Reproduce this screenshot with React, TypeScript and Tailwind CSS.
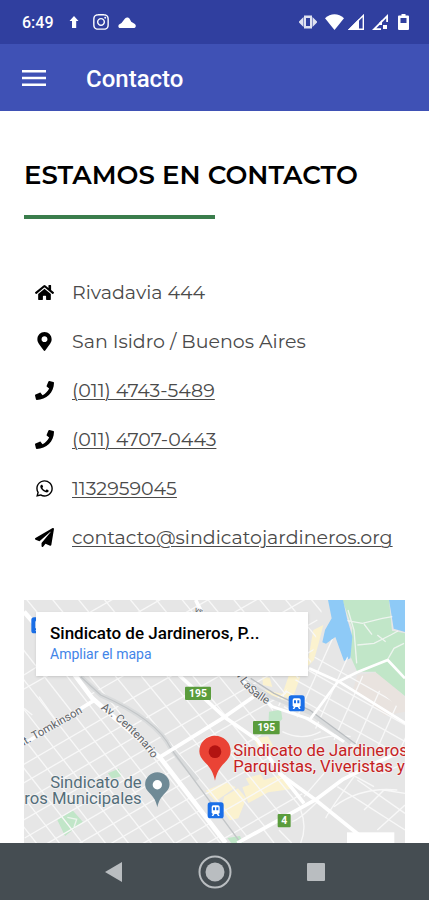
import type { IconType } from 'react-icons';
import { FaHome, FaMapMarkerAlt, FaPaperPlane, FaPhone, FaWhatsapp } from 'react-icons/fa';
import { FaInstagram } from 'react-icons/fa6';

type Contact = { icon: IconType; text: string; href?: string };

const contacts: Contact[] = [
  { icon: FaHome, text: 'Rivadavia 444' },
  { icon: FaMapMarkerAlt, text: 'San Isidro / Buenos Aires' },
  { icon: FaPhone, text: '(011) 4743-5489', href: 'tel:01147435489' },
  { icon: FaPhone, text: '(011) 4707-0443', href: 'tel:01147070443' },
  { icon: FaWhatsapp, text: '1132959045', href: 'https://wa.me/1132959045' },
  {
    icon: FaPaperPlane,
    text: 'contacto@sindicatojardineros.org',
    href: 'mailto:contacto@sindicatojardineros.org',
  },
];

function StatusBar() {
  return (
    <div className="flex h-11 items-center justify-between bg-[#303f9f] pr-5 pl-[22px] text-white">
      <div className="flex items-center">
        <span className="w-[46px] pt-0.5 text-base font-medium">6:49</span>
        <svg className="h-3 w-3" viewBox="0 0 12 12" fill="currentColor">
          <path d="M6 0l4.500 5H8.200v7H4V5H1.500z" />
        </svg>
        <FaInstagram className="ml-3 h-[18px] w-[18px]" />
        <svg className="ml-2 h-[11px] w-[18px]" viewBox="0 0 18 11" fill="currentColor">
          <path d="M1.500 11C0 10.500 0 8 1.500 7.200L3.500 6 7 1.500C8.500 0 11 .3 12 2.500l1.200 2.300 3.300 2C18.400 8 18 10.600 16.300 11z" />
        </svg>
      </div>
      <div className="flex items-center">
        <svg className="h-3.5 w-[18px]" viewBox="0 0 18 14" fill="currentColor">
          <path d="M5 .5h8v13H5zM4.500 2v10L0 7.500v-1zM13.500 2v10L18 7.500v-1z" opacity=".85" />
          <rect x="7" y="3" width="4" height="8" fill="#303f9f" />
        </svg>
        <svg className="ml-2 h-4 w-[19px]" viewBox="0 0 19 16" fill="currentColor">
          <path d="M9.500 16L0 4.200C5.500-1 13.500-1 19 4.200z" />
        </svg>
        <svg className="ml-1 h-4 w-4" viewBox="0 0 16 16">
          <path d="M1.500 15.300L15.300 1.500v13.800z" fill="none" stroke="currentColor" strokeWidth="1.400" />
          <path d="M0 16L11 5v11z" fill="currentColor" />
        </svg>
        <svg className="ml-2 h-4 w-4" viewBox="0 0 16 16" fill="currentColor">
          <path d="M0 16L16 0v8h-1.800V4.300L4.300 14.200H9V16z" />
          <path d="M7 9l3-3v5H7zM11 11h4v4h-4z" />
        </svg>
        <svg className="ml-2.5 h-4 w-[11px]" viewBox="0 0 11 16" fill="currentColor">
          <path
            fillRule="evenodd"
            d="M3.500 0h4v1.500H10a1 1 0 0 1 1 1V15a1 1 0 0 1-1 1H1a1 1 0 0 1-1-1V2.500a1 1 0 0 1 1-1h2.500zM2.500 4v5h6V4z"
          />
        </svg>
      </div>
    </div>
  );
}

function AppBar() {
  return (
    <header className="flex h-[67px] items-center bg-[#3f51b5] pl-[22px] text-white">
      <button type="button" aria-label="Abrir menú" className="flex w-16 items-center">
        <svg className="h-4 w-6" viewBox="0 0 24 16" fill="currentColor">
          <path d="M0 0h24v2.600H0zM0 6.700h24v2.600H0zM0 13.400h24V16H0z" />
        </svg>
      </button>
      <span className="pt-0.5 text-2xl leading-7 font-medium">Contacto</span>
    </header>
  );
}

// Evenly spaced parallel streets, drawn as one path
function streets(x: number, y: number, stepX: number, stepY: number, dx: number, dy: number, count: number) {
  return Array.from({ length: count }, (_, i) => `M${x + i * stepX} ${y + i * stepY}l${dx} ${dy}`).join('');
}

function StationIcon({ x, y }: { x: number; y: number }) {
  return (
    <g transform={`translate(${x} ${y})`}>
      <rect width="48" height="48" rx="8" fill="#1a6fe8" />
      <rect x="12" y="9" width="24" height="26" rx="5" fill="#fff" />
      <path d="M16 15h6v9h-6zM26 15h6v9h-6z" fill="#1a6fe8" />
      <path d="M16 34h5l-4 7h-5zM27 34h5l4 7h-5z" fill="#fff" />
    </g>
  );
}

function RouteShield({ x, y, width, label }: { x: number; y: number; width: number; label: string }) {
  return (
    <g transform={`translate(${x} ${y})`}>
      <rect width={width} height="40" rx="3" fill="#5a9c3c" />
      <text x={width / 2} y="31" textAnchor="middle" fontSize="31" fontWeight="700" fill="#fff">
        {label}
      </text>
    </g>
  );
}

function MapPin({ x, y, scale, fill, dot, radius }: { x: number; y: number; scale: number; fill: string; dot: string; radius: number }) {
  return (
    <g transform={`translate(${x} ${y}) scale(${scale})`}>
      <path d="M0 0c-5-25-14-39-29-54C-41-66-47-75-47-88a47 47 0 0 1 94 0c0 13-6 22-18 34C14-39 5-25 0 0z" fill={fill} />
      <circle cy="-87" r={radius} fill={dot} />
    </g>
  );
}

function StreetMap() {
  return (
    <svg
      className="block h-full w-full font-[Roboto,sans-serif]"
      viewBox="0 0 1143 729"
      preserveAspectRatio="xMidYMid slice"
      role="img"
      aria-label="Mapa de San Isidro"
    >
      <defs>
        <clipPath id="west">
          <path d="M0 30L210 295 410 480 600 729H0z" />
        </clipPath>
        <clipPath id="center">
          <path d="M0 0H900L860 190 750 325 700 430 860 610 640 729H600L410 470 200 290 20 60z" />
        </clipPath>
        <clipPath id="east">
          <path d="M900 130L940 110 985 200 1143 340V450H980L750 310 860 190z" />
        </clipPath>
        <path id="centenario" d="M229 326Q350 410 400 500" />
        <path id="lasalle" d="M634 218Q670 300 790 338" />
        <path id="tomkinson" d="M-10 443L240 302" />
      </defs>

      <rect width="1143" height="729" fill="#e6e6e6" />

      {/* Commercial areas */}
      <g fill="#fbf2cf">
        <path d="M868 90l30-15-14 55-14 50-22 22zM795 225l34 5-25 70-30-15zM715 230l22 3 8 28-28-6zM722 270l66 14-10 20-50-18zM690 415l42-6 15 28-44 10zM545 572l60-25 30 15-60 42zM600 590l42-25 25 30-24 60-26 6-24-35zM655 562l120-40 28 45-70 10-60 32zM665 535l45-12 14 24-45 12z" />
      </g>

      {/* Parks */}
      <g fill="#c1e6c8">
        <path d="M955 0H1095L1104 92 1143 100V285L1090 240 1055 215 1000 215 975 160 985 85z" />
        <path d="M735 335l36-6 4 28-28 28-14-6zM252 520l32-14 10 22-30 8zM100 660l45-30 32 36-54 42zM610 714l38-6 8 21h-34z" />
      </g>
      <path d="M1000 225l60-8 83 73v45l-60 12-95-80z" fill="#e9e3df" />
      <path d="M1055 217l35-37 53 58v50z" fill="#c1e6c8" />

      {/* River */}
      <g fill="#8ecaf7">
        <path d="M912 0h45l12 55 16 55-6 65-19 8-26-72-28 20-11-4 8-37 20-35z" />
        <path d="M1095 0h48v96l-34-10-6-38z" />
      </g>

      {/* Minor streets */}
      <g fill="none" stroke="#f8f8f8" strokeWidth="4">
        <g clipPath="url(#west)">
          <path d={streets(-30, 510, 8, 51, 620, -360, 12)} />
          <path d={streets(-500, 130, 69, 0, 500, 640, 16)} />
          <path d="M0 225l95-60M-5 270l150-85M45 290l50 70M0 325l25 20" />
        </g>
        <g clipPath="url(#center)">
          <path d={streets(0, 150, 36, 62, 700, -400, 13)} />
          <path d={streets(-40, -60, 76, -2, 640, 780, 13)} />
        </g>
        <g clipPath="url(#east)">
          <path d={streets(780, 120, 0, 50, 480, 270, 8)} />
          <path d={streets(880, 60, 58, 28, -180, 400, 8)} />
        </g>
        <path d="M870 420q70-20 110-10M775 395q60 30 115 0M900 520l-60 70M990 530q-80 110-85 125M940 560l203 130M930 620q80-60 190-50M1000 540l143 100M880 605q-50 50-75 60M1020 630l60-60 63 10M1060 690l83-75M830 630q20 50 0 99M765 690l38 39M720 690l30 39M1143 490l-70 30-65-30M940 500l110 60" />
        <path d="M970 62l45 8 60-15 30-5M1020 72l24 32M1000 135l50-5 50-25 22-12M1060 105l25 20M1090 180l20-35 30-15M972 30l18 60 8 100M130 652l28 6-8 24" strokeOpacity=".8" />
      </g>

      {/* Railways */}
      <g fill="none" strokeLinejoin="round">
        <path d="M170 230l60 55q170 75 210 160l80 95" stroke="#d9dbdc" strokeWidth="14" />
        <path d="M650 235l90 55 120 50 120 90" stroke="#d9dbdc" strokeWidth="11" />
        <path d="M170 230l60 55q170 75 210 160l210 284" stroke="#c3c6c8" strokeWidth="4" />
        <path d="M680 235l70 45 110 52 135 100" stroke="#b9bdc0" strokeWidth="4" />
      </g>

      {/* Avenues */}
      <g fill="none" stroke="#fff" strokeWidth="11" strokeLinejoin="round">
        <path d="M0 35l70 80 135 180 205 180 195 254" strokeWidth="14" />
        <path d="M-10 438l225-140M410 470l190-118 100-70" />
        <path d="M465 225l135 125 100 70 65 95 75 95M515 0l20 40" />
        <path d="M765 520l110 80 160 129" />
        <path d="M640 729l235-130 80-60 100-50 88-40" />
        <path d="M655 240l90 80 105 35 110 70" strokeWidth="9" />
        <path d="M855 205l90 40 200 125M1143 235l-52-55-90 36-60 30-85 115" strokeWidth="8" />
      </g>

      <g fontSize="34" fill="#5f6468" stroke="#f2f2f2" strokeWidth="4" paintOrder="stroke">
        <text>
          <textPath href="#tomkinson">nt. Tomkinson</textPath>
        </text>
        <text>
          <textPath href="#centenario">Av. Centenario</textPath>
        </text>
        <text>
          <textPath href="#lasalle">a LaSalle</textPath>
        </text>
        <text x="512" y="36" fontSize="26" transform="rotate(20 512 30)">
          ys
        </text>
      </g>

      <RouteShield x={483} y={260} width={78} label="195" />
      <RouteShield x={687} y={363} width={80} label="195" />
      <RouteShield x={761} y={642} width={39} label="4" />
      <StationIcon x={794} y={286} />
      <StationIcon x={551} y={607} />
      <StationIcon x={22} y={52} />

      <g fontSize="50" fill="#546e7a" stroke="#f2f2f2" strokeWidth="5" paintOrder="stroke" textAnchor="end">
        <text x="353" y="563">Sindicato de</text>
        <text x="353" y="612">ros Municipales</text>
      </g>
      <MapPin x={400} y={622} scale={0.78} fill="#6f8a96" dot="#fff" radius={18} />

      <MapPin x={573} y={542} scale={1} fill="#ea4335" dot="#b31412" radius={19} />
      <g fontSize="50" fill="#c5221f" stroke="#f5f0f0" strokeWidth="5" paintOrder="stroke">
        <text x="628" y="467">Sindicato de Jardineros</text>
        <text x="628" y="516">Parquistas, Viveristas y</text>
      </g>

      <rect x="969" y="697" width="142" height="32" fill="#fff" />
    </svg>
  );
}

function NavBar() {
  return (
    <nav className="flex h-[57px] items-center justify-center gap-[75px] bg-[#454d52] text-[#b9bdc0]">
      <button type="button" aria-label="Atrás">
        <svg className="h-5 w-[18px]" viewBox="0 0 18 20" fill="currentColor">
          <path d="M17 0v20L0 10z" />
        </svg>
      </button>
      <button type="button" aria-label="Inicio">
        <svg className="h-[34px] w-[34px]" viewBox="0 0 34 34">
          <circle cx="17" cy="17" r="15.500" fill="none" stroke="currentColor" strokeWidth="2" />
          <circle cx="17" cy="17" r="9.500" fill="currentColor" />
        </svg>
      </button>
      <button type="button" aria-label="Recientes">
        <svg className="h-[18px] w-[18px]" viewBox="0 0 18 18" fill="currentColor">
          <rect width="18" height="18" rx="1" />
        </svg>
      </button>
    </nav>
  );
}

export default function App() {
  return (
    <div className="flex min-h-screen flex-col bg-white font-[Roboto,sans-serif]">
      <StatusBar />
      <AppBar />

      <main className="flex-1 px-6 pt-12">
        <h1 className="font-[Montserrat,Inter,sans-serif] text-[26px] leading-8 font-semibold whitespace-nowrap text-black">
          ESTAMOS EN CONTACTO
        </h1>
        <div className="mt-6 h-1 w-1/2 bg-[#3a7d4c]" />

        <ul className="mt-[49px] font-[Montserrat,Inter,sans-serif] text-[19px] text-[#4a4a4a]">
          {contacts.map(({ icon: Icon, text, href }) => (
            <li key={text} className="flex h-[49px] items-center">
              <span className="mr-4 flex w-8 justify-end">
                <span className="flex w-6 justify-center">
                  <Icon className="h-[19px] w-[19px] text-black" />
                </span>
              </span>
              <span className="pt-0.5">
                {href ? (
                  <a href={href} className="underline decoration-1 underline-offset-2">
                    {text}
                  </a>
                ) : (
                  text
                )}
              </span>
            </li>
          ))}
        </ul>

        <section className="relative mt-[38px] h-[243px] overflow-hidden">
          <StreetMap />
          {/* Place card over the map */}
          <div className="absolute top-3 left-3 w-[272px] bg-white px-3.5 pt-2.5 pb-3 shadow">
            <div className="truncate text-[17px] leading-[22px] font-medium text-black">Sindicato de Jardineros, P...</div>
            <a href="#mapa" className="block text-sm leading-5 text-[#4285e8]">
              Ampliar el mapa
            </a>
          </div>
        </section>
      </main>

      <NavBar />
    </div>
  );
}
